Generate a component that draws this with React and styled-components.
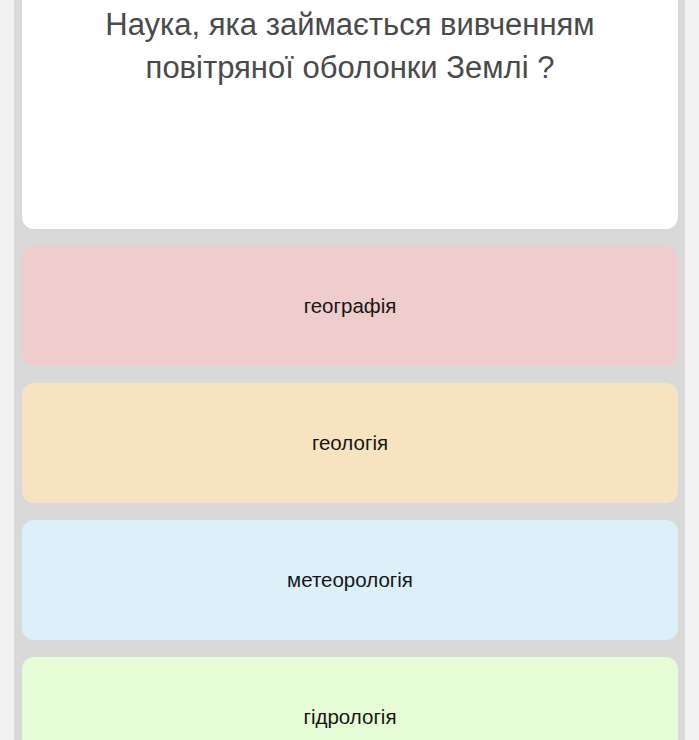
import React from 'react'
import styled, { createGlobalStyle } from 'styled-components'

const GlobalStyle = createGlobalStyle`
  html, body {
    margin: 0;
    padding: 0;
    background: #f2f2f2;
    font-family: "Liberation Sans", Arial, sans-serif;
  }
`

const Page = styled.div`
  display: flex;
  justify-content: center;
  padding: 0 14px;
  min-height: 740px;
  overflow: hidden;
`

const Panel = styled.div`
  flex: 1;
  display: flex;
  flex-direction: column;
  gap: 17px;
  background: #d9d9d9;
  padding: 0 7px 0 8px;
`

const QuestionCard = styled.div`
  background: #ffffff;
  border-radius: 0 0 12px 12px;
  min-height: 229px;
  box-sizing: border-box;
  padding: 3px 10px 0;
  text-align: center;
  color: #4a4a4a;
  font-size: 31px;
  line-height: 43px;
`

const Answer = styled.div`
  display: flex;
  align-items: center;
  justify-content: center;
  height: 120px;
  flex-shrink: 0;
  border-radius: 12px;
  background: ${p => p.$bg};
  color: #161616;
  font-size: 20.5px;
`

const answers = [
  { text: 'географія', bg: '#efcdcd' },
  { text: 'геологія', bg: '#f7e3c0' },
  { text: 'метеорологія', bg: '#dcf0fa' },
  { text: 'гідрологія', bg: '#e6fcd6' },
]

export default function App () {
  return (
    <>
      <GlobalStyle />
      <Page>
        <Panel>
          <QuestionCard>
            Наука, яка займається вивченням<br />
            повітряної оболонки Землі ?
          </QuestionCard>
          {answers.map(a => (
            <Answer key={a.text} $bg={a.bg}>{a.text}</Answer>
          ))}
        </Panel>
      </Page>
    </>
  )
}
